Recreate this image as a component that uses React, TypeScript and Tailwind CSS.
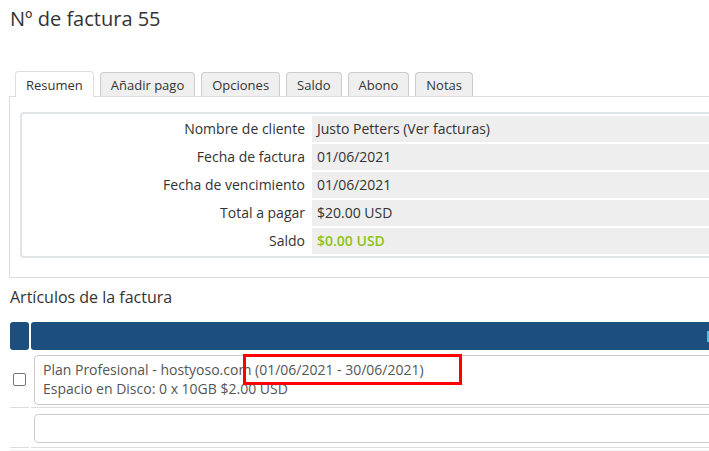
const tabs = ["Resumen", "Añadir pago", "Opciones", "Saldo", "Abono", "Notas"];

const summary = [
  { label: "Nombre de cliente", value: "Justo Petters (Ver facturas)" },
  { label: "Fecha de factura", value: "01/06/2021" },
  { label: "Fecha de vencimiento", value: "01/06/2021" },
  { label: "Total a pagar", value: "$20.00 USD" },
  { label: "Saldo", value: "$0.00 USD", accent: true },
];

export default function App() {
  return (
    <div className="relative h-[451px] w-[709px] overflow-hidden bg-white font-['Open_Sans',sans-serif] text-[#333]">
      <div className="w-[780px] pl-[9px]">
        <h1 className="pl-[1px] pt-[5px] text-[20px] leading-[28px]">Nº de factura 55</h1>

        <div className="relative z-10 mt-[38px] flex items-end gap-[6px] pl-[6px]">
          {tabs.map((tab, i) => (
            <Tab key={tab} label={tab} active={i === 0} />
          ))}
        </div>

        <div className="border border-[#ddd] pb-[19px] pl-[10px] pt-[15px]">
          <div className="rounded-[4px] border-2 border-[#dfe4e7] p-[2px]">
            <div className="grid grid-cols-[286px_1fr] gap-[2px] text-[14px] leading-[26px]">
              {summary.map((row) => (
                <SummaryRow key={row.label} {...row} />
              ))}
            </div>
          </div>
        </div>

        <h2 className="mt-[8px] pl-[1px] text-[16px] leading-[22px]">Artículos de la factura</h2>

        <div className="mt-[14px] pl-[1px]">
          <div className="flex h-[28px] gap-[2px]">
            <div className="w-[19px] rounded-[3px] bg-[#1d4f7e]" />
            <div className="flex flex-1 items-center rounded-[3px] bg-[#1d4f7e]">
              <span className="ml-[676px] h-[11px] w-[4px] bg-[#5bc0de]" />
            </div>
          </div>

          <div className="mt-[2px] flex gap-[2px]">
            <div className="flex h-[56px] w-[19px] items-center justify-center border-b border-[#ddd]">
              <span className="h-[13px] w-[13px] rounded-[2px] border border-[#767676] bg-white" />
            </div>
            <div className="h-[56px] flex-1 border-b border-[#ddd] pl-[3px] pt-[3px]">
              <div className="h-[50px] rounded-[4px] border border-[#ccc] pl-[8px] pt-[4px] text-[14px] leading-[19px] text-[#555]">
                <p>Plan Profesional - hostyoso.com (01/06/2021 - 30/06/2021)</p>
                <p>Espacio en Disco: 0 x 10GB $2.00 USD</p>
              </div>
            </div>
          </div>

          <div className="mt-[2px] flex gap-[2px]">
            <div className="h-[38px] w-[19px] border-b border-[#ddd]" />
            <div className="h-[38px] flex-1 border-b border-[#ddd] pl-[3px] pt-[4px]">
              <div className="h-[29px] rounded-[4px] border border-[#ccc]" />
            </div>
          </div>
          <div className="mt-[2px] h-[4px] bg-[#f2f2f2]" />
        </div>
      </div>

      <div className="absolute left-[243px] top-[354px] h-[31px] w-[219px] border-[3px] border-[#ff0000]" />
    </div>
  );
}

function Tab({ label, active }: { label: string; active?: boolean }) {
  return (
    <div
      className={
        active
          ? "-mb-px flex h-[26px] items-center rounded-t-[4px] border border-b-0 border-[#ddd] bg-white px-[10px] text-[13px] leading-[18px]"
          : "flex h-[24px] items-center rounded-t-[4px] border border-b-0 border-[#ccc] bg-[#efefef] px-[10px] text-[13px] leading-[18px]"
      }
    >
      {label}
    </div>
  );
}

function SummaryRow({ label, value, accent }: { label: string; value: string; accent?: boolean }) {
  return (
    <>
      <div className="pr-[5px] text-right">{label}</div>
      <div className={accent ? "bg-[#eee] pl-[5px] font-semibold text-[#8dc21f]" : "bg-[#eee] pl-[5px]"}>{value}</div>
    </>
  );
}
